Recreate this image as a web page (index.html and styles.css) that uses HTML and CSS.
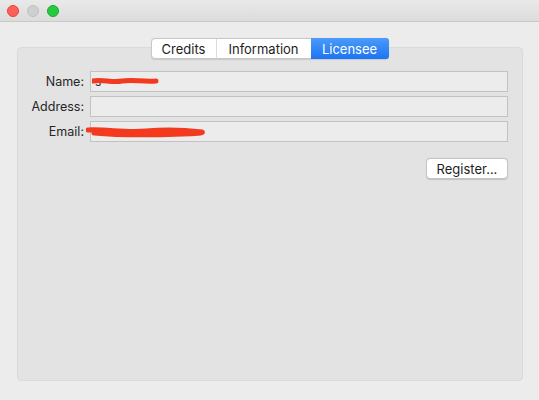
FILE: index.html
```html
<!DOCTYPE html>
<html>
<head>
<meta charset="utf-8">
<link rel="stylesheet" href="styles.css">
</head>
<body>
<div class="window">
  <div class="titlebar">
    <span class="light red"></span>
    <span class="light gray"></span>
    <span class="light green"></span>
  </div>
  <div class="content">
    <div class="panel">
      <div class="tabs">
        <div class="tab t-credits">Credits</div>
        <div class="tab t-info">Information</div>
        <div class="tab t-lic active">Licensee</div>
      </div>
      <div class="form">
        <label class="lbl">Name:</label>
        <div class="field">
          <span class="val">s</span>
          <svg class="scribble s-name" width="70" height="12" viewBox="0 0 70 12">
            <path d="M1 5 C10 3 20 7 30 5 C40 3 50 6 64 5" stroke="#f43a1e" stroke-width="5" fill="none" stroke-linecap="round"/>
          </svg>
        </div>
        <label class="lbl">Address:</label>
        <div class="field"></div>
        <label class="lbl">Email:</label>
        <div class="field">
          <svg class="scribble s-email" width="124" height="14" viewBox="0 0 124 14">
            <path d="M2 5 C20 4 40 8 60 6 C80 4 100 5 116 7 C118 8 110 9 96 9 C70 10 30 10 8 8" stroke="#f43a1e" stroke-width="5" fill="none" stroke-linecap="round"/>
          </svg>
        </div>
      </div>
      <div class="actions">
        <button class="btn">Register...</button>
      </div>
    </div>
  </div>
</div>
</body>
</html>
```
FILE: styles.css
```css
* { box-sizing: border-box; }
html, body { margin: 0; padding: 0; }
body {
  width: 539px;
  height: 400px;
  background: #ececec;
  font-family: Inter, "Liberation Sans", sans-serif;
  font-size: 13px;
  color: #242424;
  overflow: hidden;
}
.window {
  width: 539px;
  height: 400px;
  display: flex;
  flex-direction: column;
  background: #ececec;
}
.titlebar {
  height: 22px;
  flex: none;
  background: linear-gradient(#e9e9e9, #dcdcdc);
  border-bottom: 1px solid #c9c9c9;
  display: flex;
  align-items: center;
  padding-left: 7px;
  gap: 8px;
}
.light {
  width: 12px;
  height: 12px;
  border-radius: 50%;
  display: block;
}
.red { background: #fe5f57; border: 1px solid #e2463f; }
.gray { background: #cfcfcf; border: 1px solid #c1c1c1; }
.green { background: #28c840; border: 1px solid #1aab29; }
.content {
  flex: 1;
  padding: 25px 16px 19px 17px;
  display: flex;
}
.panel {
  flex: 1;
  background: #e3e3e3;
  border: 1px solid #dadada;
  border-radius: 4px;
  display: flex;
  flex-direction: column;
  padding: 0 14px 0 0;
}
.tabs {
  align-self: center;
  margin-top: -10px;
  margin-left: 13px;
  display: flex;
  height: 21px;
  background: #fff;
  border: 1px solid #c8c8c8;
  border-radius: 4px;
  box-shadow: 0 0.5px 1px rgba(0,0,0,0.12);
  position: relative;
  z-index: 1;
}
.tab {
  display: flex;
  align-items: center;
  justify-content: center;
  height: 100%;
  color: #1e1e1e;
  font-size: 13px;
}
.t-credits { width: 65px; border-right: 1px solid #dcdcdc; }
.t-info { width: 94px; }
.t-lic { width: 78px; }
.tab.active {
  background: linear-gradient(#4a9bf9, #1c74f4);
  color: #fff;
  border-radius: 0 3px 3px 0;
  margin: -1px -1px -1px 0;
  height: 21px;
}
.form {
  margin-top: 12px;
  display: grid;
  grid-template-columns: 66px 1fr;
  column-gap: 6px;
  row-gap: 4px;
  align-items: center;
}
.lbl {
  text-align: right;
  color: #262626;
  font-size: 12.5px;
}
.field {
  height: 21px;
  background: #ececec;
  border: 1px solid #c2c2c2;
  position: relative;
  display: flex;
  align-items: center;
  padding-left: 4px;
}
.val { font-size: 12px; color: #333; }
.scribble { position: absolute; }
.s-name { left: 1px; top: 4px; }
.s-email { left: -5px; top: 3px; }
.actions {
  display: flex;
  justify-content: flex-end;
  margin-top: 16px;
}
.btn {
  width: 82px;
  height: 21px;
  background: #fff;
  border: 1px solid #c4c4c4;
  border-radius: 4px;
  box-shadow: 0 0.5px 1px rgba(0,0,0,0.15);
  font-family: Inter, "Liberation Sans", sans-serif;
  font-size: 13px;
  color: #1e1e1e;
  padding: 0;
}
```
